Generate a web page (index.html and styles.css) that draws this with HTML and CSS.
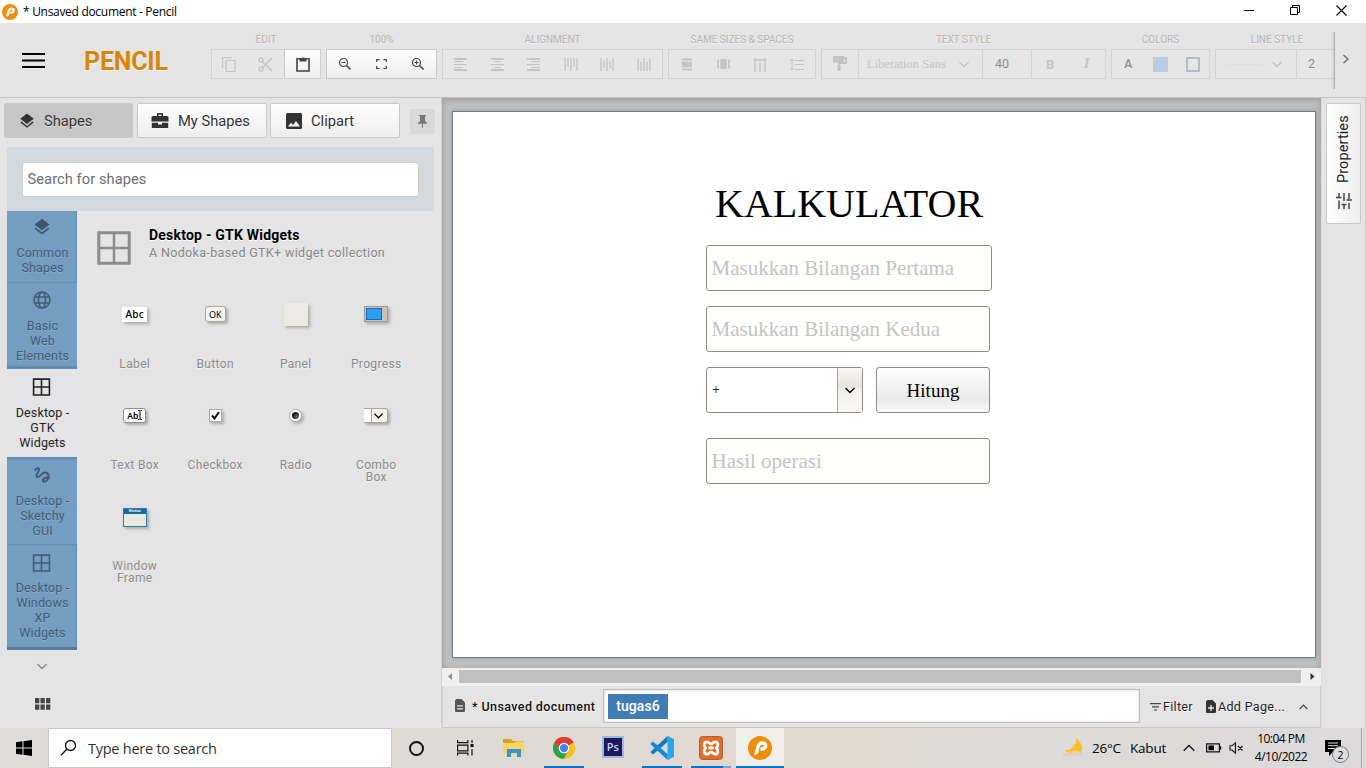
FILE: index.html
```html
<!DOCTYPE html>
<html lang="en">
<head>
<meta charset="utf-8">
<title>* Unsaved document - Pencil</title>
<link rel="stylesheet" href="styles.css">
</head>
<body>
<svg class="sprite" aria-hidden="true">
  <symbol id="layers" viewBox="0 0 24 24"><path d="M12 18.500l-7.400-5.700L3 14l9 7 9-7-1.600-1.200zM12 16l9-7-9-7-9 7z"/></symbol>
  <symbol id="grid4" viewBox="0 0 24 24"><path d="M2 2h20v20H2zM12 2v20M2 12h20" fill="none" stroke="currentColor" stroke-width="2"/></symbol>
  <symbol id="down" viewBox="0 0 12 12"><path d="M1.500 4L6 8.500 10.500 4" fill="none" stroke="currentColor" stroke-width="1.400"/></symbol>
  <symbol id="pencil" viewBox="0 0 24 24"><circle cx="12" cy="12" r="12" fill="#ee8e0b"/><path d="M8.500 17l1-4.500C10.200 8.500 11.500 7 14.300 7c2.500 0 3.700 1.400 3.200 3.200-.5 2.200-2.200 3-5 3" fill="none" stroke="#fff" stroke-width="3.400"/><path d="M6.500 19.500l.300-4 3.700 1.500z" fill="#fff"/></symbol>
  <symbol id="zoomglass" viewBox="0 0 14 14"><g fill="none" stroke="currentColor"><circle cx="5.500" cy="5.500" r="4" stroke-width="1.200"/><path d="M8.500 8.500l4 4" stroke-width="1.600"/><path d="M3.500 5.500h4"/></g></symbol>
</svg>
<div class="window">
  <header class="titlebar">
    <svg class="app-icon"><use href="#pencil"/></svg>
    <span class="title">* Unsaved document - Pencil</span>
    <div class="win-buttons">
      <svg width="11" height="11"><path d="M0 5.500h10" stroke="#000"/></svg>
      <svg width="11" height="11"><path d="M.5 2.500h7v7h-7zM2.500 2V.5h7v7H8" stroke="#000" fill="none"/></svg>
      <svg width="11" height="11"><path d="M.5.5l10 10M10.500.5l-10 10" stroke="#000" stroke-width="1.100"/></svg>
    </div>
  </header>

  <div class="toolbar">
    <svg class="burger" width="24" height="16"><path d="M0 1h23M0 7.500h23M0 14h23" stroke="#000" stroke-width="2"/></svg>
    <div class="brand">PENCIL</div>
    <div class="groups">
      <section class="group g-edit"><h6>EDIT</h6><div class="box">
        <span class="tool w36"><svg width="15" height="15"><path d="M4 3.500h9v11H4zM.6 11V.6H10" fill="none" stroke="currentColor" stroke-width="1.200"/></svg></span>
        <span class="tool w37"><svg width="15" height="15" fill="none" stroke="currentColor" stroke-width="1.500"><circle cx="3" cy="3" r="2"/><circle cx="3" cy="12" r="2"/><path d="M4.500 4.500l9.500 9.500M4.500 10.500L14 1"/></svg></span>
        <span class="tool enabled paste"><svg width="14" height="16"><path d="M1 2.800h12V15H1z" fill="none" stroke="currentColor" stroke-width="1.600"/><path d="M3.500 2.500h2a1.600 1.600 0 0 1 3 0h2v3h-7z" fill="currentColor"/></svg></span>
      </div></section>
      <section class="group g-zoom"><h6>100%</h6><div class="box enabled">
        <span class="tool"><svg width="14" height="14"><use href="#zoomglass"/></svg></span>
        <span class="tool"><svg width="11" height="11"><path d="M.7 3V.7H3.500M7.500.7h2.800V3M10.300 7v2.500H7.500M3.500 9.500H.7V7" fill="none" stroke="currentColor" stroke-width="1.200"/></svg></span>
        <span class="tool"><svg width="14" height="14"><use href="#zoomglass"/><path d="M5.500 3.500v4" stroke="currentColor"/></svg></span>
      </div></section>
      <section class="group g-align"><h6>ALIGNMENT</h6><div class="box">
        <span class="tool"><svg width="14" height="14"><path d="M0 2h13M0 13h13" stroke-width="2"/><path d="M0 4.500h9M0 7.500h13M0 10.500h9"/></svg></span>
        <span class="tool"><svg width="14" height="14"><path d="M0 2h13M0 13h13" stroke-width="2"/><path d="M3 4.500h7M0 7.500h13M3 10.500h7"/></svg></span>
        <span class="tool"><svg width="14" height="14"><path d="M0 2h13M0 13h13" stroke-width="2"/><path d="M4 4.500h9M0 7.500h13M4 10.500h9"/></svg></span>
        <span class="tool"><svg width="14" height="14"><path d="M1 1v13M4 1v9M7 1v13M10 1v9M13 1v13" stroke-width="1.400"/></svg></span>
        <span class="tool"><svg width="14" height="14"><path d="M1 1v13M4 4v7M7 1v13M10 4v7M13 1v13" stroke-width="1.400"/></svg></span>
        <span class="tool"><svg width="14" height="14"><path d="M1 1v13M4 5v9M7 1v13M10 5v9M13 1v13" stroke-width="1.400"/></svg></span>
      </div></section>
      <section class="group g-same"><h6>SAME SIZES &amp; SPACES</h6><div class="box">
        <span class="tool"><svg width="12" height="13"><path d="M1 1.500h10M1 11.500h10" stroke-width="2"/><path d="M1 6.500h10" stroke-width="5.500"/></svg></span>
        <span class="tool"><svg width="13" height="12"><path d="M1 1.500v9M12 1.500v9" stroke-width="2"/><path d="M6.500 1v10" stroke-width="6.500"/></svg></span>
        <span class="tool"><svg width="14" height="15"><path d="M1 3h12M2 5v10M7 5v10M12 5v10M3 1L1 3l2 2M11 1l2 2-2 2" stroke-width="1.300"/></svg></span>
        <span class="tool"><svg width="15" height="13"><path d="M3 1v11M1 3l2-2 2 2M1 10l2 2 2-2M6 2.500h9M6 6.500h9M6 11.500h9"/></svg></span>
      </div></section>
      <section class="group g-text"><h6>TEXT STYLE</h6><div class="box">
        <span class="tool format"><svg width="14" height="16"><path d="M1 .5h9v5H1zM10 2h3v5H6v8" stroke-width="2"/><path d="M1 3h9" stroke-width="4"/><path d="M6 9v6" stroke-width="3"/></svg></span>
        <span class="font-name">Liberation Sans <svg width="12" height="12"><use href="#down"/></svg></span>
        <span class="font-size">40</span>
        <span class="tool bold">B</span><span class="tool italic">I</span>
      </div></section>
      <section class="group g-colors"><h6>COLORS</h6><div class="box">
        <span class="tool letter">A</span><span class="tool"><i class="fill-swatch"></i></span><span class="tool"><i class="stroke-swatch"></i></span>
      </div></section>
      <section class="group g-line"><h6>LINE STYLE</h6><div class="box">
        <span class="line-kind"><i></i><svg width="12" height="12"><use href="#down"/></svg></span><span class="line-width">2</span>
      </div></section>
    </div>
    <div class="more"><svg width="8" height="10"><path d="M1.500 1L6 5 1.500 9" fill="none" stroke="#666" stroke-width="1.300"/></svg></div>
  </div>

  <main class="workspace">
    <aside class="left">
      <nav class="tabs">
        <button class="tab active"><svg width="18" height="18"><use href="#layers"/></svg>Shapes</button>
        <button class="tab mine"><svg width="18" height="16"><path d="M6 3V0h6v3h4a1.500 1.500 0 0 1 1.500 1.500v4H.5v-4A1.500 1.500 0 0 1 2 3zm1.500 0h3V1.500h-3zM.8 9.800H7V11.500h4V9.800h6.200V15H.8z" fill-rule="evenodd"/></svg>My Shapes</button>
        <button class="tab clip"><svg width="16" height="16"><path d="M1.500 0h13A1.500 1.500 0 0 1 16 1.500v13a1.500 1.500 0 0 1-1.500 1.500h-13A1.500 1.500 0 0 1 0 14.500v-13A1.500 1.500 0 0 1 1.500 0zM2 13.500h12L10 8l-3 4-2-2.500z" fill-rule="evenodd"/></svg>Clipart</button>
        <span class="pin"><svg width="9" height="13"><path d="M1 0h7v1H7v5l2 2v.8H5V12.500H4V8.800H0V8l2-2V1H1z"/></svg></span>
      </nav>
      <div class="search"><input type="text" placeholder="Search for shapes"></div>
      <div class="library">
        <div class="cats">
          <div class="cat c1"><svg width="20" height="20"><use href="#layers"/></svg>Common<br>Shapes</div>
          <div class="cat c2"><svg width="20" height="20" viewBox="0 0 20 20" fill="none" stroke="currentColor" stroke-width="1.500"><circle cx="10" cy="10" r="8"/><ellipse cx="10" cy="10" rx="3.500" ry="8"/><path d="M2.500 7h15M2.500 13h15"/></svg>Basic<br>Web<br>Elements</div>
          <div class="cat selected"><svg width="19" height="20"><use href="#grid4"/></svg>Desktop -<br>GTK<br>Widgets</div>
          <div class="cat c4"><svg width="20" height="20" fill="none" stroke="currentColor" stroke-width="2"><path d="M2.500 5.500C4.500 3 7.500 2 7 5c-.3 2-4 5.500-2 7 2.500 1 4.500-4.500 8-4.500 3 0 4 2 3.500 5-.5 3-4.500 5.500-5.500 3.500-.8-2 2.500-4 7-3.700"/></svg>Desktop -<br>Sketchy<br>GUI</div>
          <div class="cat c5"><svg width="19" height="20"><use href="#grid4"/></svg>Desktop -<br>Windows<br>XP<br>Widgets</div>
          <svg class="cat-more" width="12" height="12"><use href="#down"/></svg>
          <svg class="cat-all" width="16" height="12"><path d="M0 0h4.300v5.300H0zM5.500 0h4.300v5.300H5.500zM11 0h4.300v5.300H11zM0 6.500h4.300v5.300H0zM5.500 6.500h4.300v5.300H5.500zM11 6.500h4.300v5.300H11z" fill="#444"/></svg>
        </div>
        <section class="collection">
          <div class="coll-head">
            <svg width="34" height="34"><path d="M1.800 1.800h30.400v30.400H1.800z" fill="none" stroke="#8b8b8b" stroke-width="3"/><path d="M17 2v30M2 17h30" stroke="#8b8b8b" stroke-width="2.500"/></svg>
            <div><h2>Desktop - GTK Widgets</h2><p>A Nodoka-based GTK+ widget collection</p></div>
          </div>
          <div class="shapes">
            <figure><div class="thumb"><span class="s-label">Abc</span></div><figcaption>Label</figcaption></figure>
            <figure><div class="thumb"><span class="s-button">OK</span></div><figcaption>Button</figcaption></figure>
            <figure><div class="thumb"><span class="s-panel"></span></div><figcaption>Panel</figcaption></figure>
            <figure><div class="thumb"><span class="s-progress"><i></i></span></div><figcaption>Progress</figcaption></figure>
            <figure><div class="thumb"><span class="s-text">Ab<svg width="4" height="10"><path d="M0 .5h1.500L2 1v8l.5.5H4M4 .5H2.500M0 9.500h1.500" fill="none" stroke="#000"/></svg></span></div><figcaption>Text Box</figcaption></figure>
            <figure><div class="thumb"><span class="s-check"><svg width="9" height="9"><path d="M1 4.500l2.500 3L8 1" fill="none" stroke="#111" stroke-width="2"/></svg></span></div><figcaption>Checkbox</figcaption></figure>
            <figure><div class="thumb"><span class="s-radio"><i></i></span></div><figcaption>Radio</figcaption></figure>
            <figure><div class="thumb"><span class="s-combo"><i></i><svg width="11" height="11" viewBox="0 0 12 12"><use href="#down"/></svg></span></div><figcaption>Combo<br>Box</figcaption></figure>
            <figure><div class="thumb"><span class="s-window"><b>Window</b></span></div><figcaption>Window<br>Frame</figcaption></figure>
          </div>
        </section>
      </div>
    </aside>

    <section class="center">
      <div class="canvas"><div class="page">
        <h1>KALKULATOR</h1>
        <div class="field first">Masukkan Bilangan Pertama</div>
        <div class="field">Masukkan Bilangan Kedua</div>
        <div class="row">
          <div class="combo"><span>+</span><b><svg width="12" height="12"><use href="#down"/></svg></b></div>
          <div class="calc">Hitung</div>
        </div>
        <div class="field result">Hasil operasi</div>
      </div></div>
      <div class="scrollbar">
        <svg width="17" height="18"><path d="M10 5v7L6 8.500z" fill="#8f8f8f"/></svg>
        <i></i>
        <svg width="20" height="18"><path d="M9.500 5v7l4-3.500z" fill="#333"/></svg>
      </div>
      <div class="pagebar">
        <svg class="doc" width="10" height="13"><path d="M1.500 0H6.500L10 3.500V12a1 1 0 0 1-1 1H1a1 1 0 0 1-1-1V1.200zM2 6.300v1.200h6V6.300zm0 3v1.200h6V9.300z" fill="#555" fill-rule="evenodd"/></svg>
        <strong>* Unsaved document</strong>
        <div class="pages"><span>tugas6</span></div>
        <svg class="filter-icon" width="12" height="8"><path d="M0 .6h11M2 3.800h7M4 7h3" stroke="#444" stroke-width="1.200"/></svg>
        <span class="filter">Filter</span>
        <svg class="add-icon" width="10" height="13"><path d="M1.500 0H6.500L10 3.500V12a1 1 0 0 1-1 1H1a1 1 0 0 1-1-1V1.200zM4.300 5v2.300H2v1.400h2.300V11h1.400V8.700H8V7.300H5.700V5z" fill="#333" fill-rule="evenodd"/></svg>
        <span class="add">Add Page...</span>
        <svg class="up" width="9" height="6"><path d="M.7 5l3.800-3.800L8.300 5" fill="none" stroke="#444" stroke-width="1.200"/></svg>
      </div>
    </section>

    <aside class="right"><div class="props">
      <span>Properties</span>
      <svg width="16" height="16" fill="none" stroke="#444" stroke-width="1.500"><path d="M3 0v4M0 4.500h5.500M3 7.500V16M8 0v8M8 12v4M5.500 11.500h5M13 0v6M10.500 7h5.500M13 10v6"/></svg>
    </div></aside>
  </main>

  <footer class="taskbar">
    <div class="start"><svg width="16" height="16"><path d="M0 2.200l6.500-.9v6.200H0zM7.500 1.200L16 0v7.500H7.500zM0 8.500h6.500v6.200L0 13.800zM7.500 8.500H16V16l-8.500-1.200z"/></svg></div>
    <div class="tb-search"><svg width="18" height="18" fill="none" stroke="#111" stroke-width="1.300"><circle cx="10.500" cy="6.500" r="5"/><path d="M7 10L1 16.300"/></svg><span>Type here to search</span></div>
    <div class="apps">
      <div class="app"><svg width="17" height="17"><circle cx="8.500" cy="8.500" r="6.500" fill="none" stroke="#111" stroke-width="2"/></svg></div>
      <div class="app"><svg width="17" height="16" fill="none" stroke="#111" stroke-width="1.200"><path d="M.6 0v2.600h10.300V0M.6 5.200h10.300v5.600H.6zM.6 15.500v-2.400h10.300v2.400M15 0v3M15 9v6.500"/><path d="M13.500 5.500h3" stroke-width="3"/></svg></div>
      <div class="app"><svg width="22" height="20"><path d="M0 1h8l2 2h11v5H0z" fill="#d9a520"/><path d="M0 5h12l1-1.500h8V16H0z" fill="#fcd565"/><path d="M4 19v-8h14v8h-4v-4H8v4z" fill="#3b93cf"/></svg></div>
      <div class="app running"><svg width="22" height="22" viewBox="0 0 24 24"><circle cx="12" cy="12" r="12" fill="#fbc116"/><path d="M12 12L1.600 6A12 12 0 0 1 22.400 6z" fill="#df3c2e"/><path d="M12 6.500h10.700A12 12 0 0 0 1.600 6l5.500 8.500z" fill="#df3c2e"/><path d="M1.600 6A12 12 0 0 0 11.500 24l5.500-9.500-9.800.3z" fill="#2ba24c"/><circle cx="12" cy="12" r="5.800" fill="#fff"/><circle cx="12" cy="12" r="4.500" fill="#4284ee"/></svg></div>
      <div class="app"><span class="ps">Ps</span></div>
      <div class="app running"><svg width="24" height="24" viewBox="0 0 24 24"><path d="M17.500 0L24 3v18l-6.500 3z" fill="#2aa5ee"/><path d="M17.500 0v6L3 18.500.3 16z" fill="#1479bf"/><path d="M.3 8L3 5.500 17.500 18v6z" fill="#1689d3"/></svg></div>
      <div class="app running split"><svg width="24" height="24"><rect x=".5" y=".5" width="23" height="23" rx="3" fill="#e66b24" stroke="#a9613a"/><path d="M8 5.800c2 0 2 2.200 4 2.200s2-2.200 4-2.200c3.500 0 3.500 4 1.500 6.200 2 2.200 2 6.200-1.500 6.200-2 0-2-2.200-4-2.200s-2 2.200-4 2.200c-3.500 0-3.500-4-1.500-6.200-2-2.200-2-6.200 1.500-6.200z" fill="none" stroke="#fff" stroke-width="2.800"/><path d="M9.500 11.900h5" stroke="#fff" stroke-width="3"/></svg></div>
      <div class="app current"><svg width="24" height="24"><use href="#pencil"/></svg></div>
    </div>
    <div class="tray">
      <svg class="weather" width="24" height="20"><path d="M15 0a10 10 0 0 1-11 12c2 6 16 7 17 0 .5-5-2-9-6-12z" fill="#fac21c"/><path d="M1 18q-1-3 3-3 3-2 6 0 3-4 7-2 5 1 4 3 2 2-3 2z" fill="#ddd1c0"/></svg>
      <span class="temp">26°C</span><span class="cond">Kabut</span>
      <svg class="chev" width="12" height="8"><path d="M.7 6.800L6 1.500l5.300 5.300" fill="none" stroke="#111" stroke-width="1.300"/></svg>
      <svg class="battery" width="16" height="10"><path d="M.6.8h12.800v8H.6z" fill="none" stroke="#111" stroke-width="1.200"/><path d="M2.500 2.500H8v4.700H2.500zM14 3.200h1.200v3.300H14z"/></svg>
      <svg class="mute" width="15" height="12"><path d="M1 3.800h2L6.500.8v10.400L3 8H1zM9 4l4.500 4.500M13.500 4L9 8.500" fill="none" stroke="#111" stroke-width="1.100"/></svg>
      <div class="clock"><span>10:04 PM</span><span>4/10/2022</span></div>
      <div class="notice"><svg width="17" height="16"><path d="M0 0h16v12H8l-4 4v-4H0z"/><path d="M3 3h10M3 5.700h10M3 8.500h7" stroke="#ddd" stroke-width="1"/></svg><b>2</b></div>
      <i class="peek"></i>
    </div>
  </footer>
</div>
</body>
</html>
```
FILE: styles.css
```css
* { box-sizing: border-box; }
body { margin: 0; font-family: Roboto, sans-serif; color: #222; overflow: hidden; }
svg { display: block; flex: none; }
.sprite { width: 0; height: 0; position: absolute; }
h1, h2, h6, p, figure { margin: 0; }
.window { width: 1366px; height: 768px; display: flex; flex-direction: column; background: #e4e4e4; }

.titlebar { height: 23px; background: #fff; display: flex; align-items: center; padding-left: 2px; flex: none; }
.app-icon { width: 16px; height: 16px; }
.title { font: 12px "Open Sans", sans-serif; color: #000; margin-left: 5px; letter-spacing: -.3px; white-space: nowrap; }
.win-buttons { margin-left: auto; display: flex; gap: 35px; padding: 0 19px 3px 0; }

.toolbar { height: 75px; flex: none; display: flex; border-bottom: 1px solid #c4c4c4; }
.burger { margin: 30px 0 0 22px; }
.brand { width: 127px; margin: 24px 0 0 38px; font-size: 25px; line-height: 30px; font-weight: 700; letter-spacing: -.2px; color: #d5860d; text-shadow: 0 1px #f4f4f4; }
.groups { width: 1123px; display: flex; gap: 5px; padding-top: 11px; overflow: hidden; flex: none; color: #c4c4c4; }
.group { flex: none; }
.group h6 { font-size: 10px; line-height: 12px; height: 15px; font-weight: 400; color: #b5b5b5; text-align: center; text-shadow: 0 1px #f1f1f1; }
.box { height: 30px; border: 1px solid #d1d1d1; display: flex; background: #e6e6e6; }
.box.enabled, .tool.enabled { background: linear-gradient(#fff, #ededed); border-color: #c8c8c8; color: #444; }
.g-edit { width: 110px; }
.g-zoom { width: 111px; }
.g-align { width: 221px; }
.g-same { width: 148px; }
.g-text { width: 285px; }
.g-colors { width: 99px; }
.g-line { width: 124px; }
.tool { flex: 1; display: flex; align-items: center; justify-content: center; }
.g-align svg, .g-same svg, .g-text .format svg { fill: none; stroke: currentColor; }
.w36 { flex: 0 0 34px; }
.w37 { flex: 0 0 38px; }
.paste { border-left: 1px solid #c8c8c8; }
.format { flex: 0 0 37px; border-right: 1px solid #d1d1d1; }
.font-name { width: 124px; display: flex; align-items: center; justify-content: space-between; padding: 0 12px 0 8px; font: 12.500px "Liberation Serif", serif; border-right: 1px solid #d1d1d1; }
.font-size { width: 49px; padding-left: 12px; font-size: 12.500px; line-height: 28px; color: #8e8e8e; border-right: 1px solid #d1d1d1; }
.bold { font: bold 13px Roboto, sans-serif; }
.italic { font: italic bold 12px "DejaVu Serif", serif; }
.letter { font-weight: 500; font-size: 12px; color: #8c8c8c; }
.fill-swatch { width: 15px; height: 15px; background: #bccbe0; }
.stroke-swatch { width: 14px; height: 15px; border: 2px solid #b7bacb; }
.line-kind { width: 81px; display: flex; align-items: center; justify-content: space-between; padding: 0 13px 0 11px; border-right: 1px solid #d1d1d1; }
.line-kind i { width: 35px; height: 1px; background: #e0e0e0; }
.line-width { padding-left: 11px; font-size: 12.500px; line-height: 28px; color: #8e8e8e; }
.more { flex: 1; margin: 9px 0 8px; padding: 22px 0 0 7px; border-left: 1px solid #b0b0b0; position: relative; background: #e4e4e4; }
.more::before { content: ""; position: absolute; left: -3px; top: 0; width: 3px; height: 57px; background: linear-gradient(90deg, transparent, #b4b4b4); }

.workspace { flex: 1; min-height: 0; display: flex; }
.left { width: 442px; border-right: 1px solid #d2d2d2; padding: 5px 0 0 4px; }
.tabs { display: flex; gap: 3px; }
.tab { width: 130px; height: 35px; display: flex; align-items: center; gap: 9px; padding: 0 0 0 13px; border: 1px solid #c8c8c8; border-radius: 2px; background: linear-gradient(#fff, #eee); font: 14.700px Roboto, sans-serif; color: #333; fill: #333; text-shadow: 0 1px #fff; }
.tab.active { background: #c6c6c6; width: 129px; text-shadow: 0 1px #e1e1e1; margin-right: 1px; gap: 8px; }
.tab.clip { padding-left: 15px; }
.pin { width: 25px; height: 25px; margin: 6px 0 0 7px; background: #d8d8d8; fill: #777; display: flex; align-items: center; justify-content: center; border-radius: 2px; }
.search { margin: 9px 0 0 3px; width: 427px; height: 64px; padding: 15px; background: #d2d8dc; }
.search input { display: block; width: 397px; height: 35px; border: 1px solid #ccc; border-radius: 3px; padding: 0 5px 2px 4.500px; font: 14.700px Roboto, sans-serif; letter-spacing: .05px; }
.search input::placeholder { color: #6f6f6f; }
.library { display: flex; padding-left: 3px; }
.cats { width: 70px; flex: none; display: flex; flex-direction: column; }
.cat { height: 88px; display: flex; flex-direction: column; padding-top: 8px; padding-left: 1px; background: #749dc1; border-bottom: 1px solid #6790b4; box-shadow: inset -1px 0 1px #658db0; font-size: 12.500px; line-height: 15px; letter-spacing: .15px; text-align: center; color: #405c76; fill: #3d556b; text-shadow: 0 1px #89abca; }
.cat svg { margin: -1px 0 6px 24px; }
.c1 { height: 72px; padding-top: 7px; }
.c1 svg { margin-bottom: 8px; }
.c2 { height: 86px; padding-top: 8px; box-shadow: inset 0 -3px 3px -2px #527ba0; }
.c2 svg { margin-bottom: 8px; }
.cat.selected { height: 88px; padding-top: 9px; color: #222; background: #e4e4e7; border-color: #e4e4e7; text-shadow: none; box-shadow: none; }
.cat.selected svg { margin-bottom: 8px; }
.c4 { padding-top: 9px; box-shadow: inset 0 3px 3px -2px #527ba0; }
.c4 svg { margin-bottom: 8px; }
.c5 { height: 105px; border-bottom: 3px solid #587c9e; }
.c5 svg { margin-top: 0; margin-bottom: 7px; }
.cat-more { color: #888; margin: 10px 0 0 29px; }
.cat-all { margin: 26px 0 0 28px; }
.collection { flex: 1; }
.coll-head { display: flex; gap: 18px; padding: 15px 0 0 20px; height: 65px; }
.coll-head svg { margin-top: 5px; }
.coll-head h2 { font-size: 14px; line-height: 18px; font-weight: 700; color: #000; letter-spacing: .22px; text-shadow: 0 1px #fff; }
.coll-head p { font-size: 12.500px; line-height: 17px; color: #858585; letter-spacing: .34px; text-shadow: 0 1px #f4f4f4; }
.shapes { display: grid; grid-template-columns: repeat(4, 80.500px); grid-auto-rows: 101px; padding-left: 17.500px; }
.thumb { height: 78px; padding: 0 0 2px; display: flex; align-items: center; justify-content: center; }
figcaption { height: 23px; font-size: 12px; line-height: 12px; text-align: center; color: #8a8a8a; letter-spacing: .35px; padding-top: 4px; text-shadow: 0 1px #f3f3f3; }
.thumb > span { display: flex; align-items: center; justify-content: center; box-shadow: 2px 2px 3px #aaa; font-family: "Noto Sans", sans-serif; font-size: 10px; color: #000; flex: none; }
.thumb .s-label { width: 25px; height: 15px; background: #fff; font-weight: 500; letter-spacing: .3px; }
.thumb .s-button { width: 21px; height: 16px; border: 1px solid #aaa596; border-radius: 3px; background: #f5f4f1; font-size: 9px; }
.s-panel { width: 24px; height: 23px; background: #edeae4; }
.thumb .s-progress { width: 24px; height: 16px; border: 1px solid #9d988b; background: #c9c3b6; justify-content: flex-start; }
.s-progress i { width: 16px; height: 12px; border: 1px solid #1368cb; background: #2d9eef; margin-left: 1px; }
.thumb .s-text { width: 23px; height: 15px; border: 1px solid #958f82; border-radius: 3px; background: #fff; font-size: 8.500px; font-weight: 600; }
.s-check { width: 13px; height: 13px; border: 1px solid #aaa; background: #fff; }
.s-radio { width: 13px; height: 13px; border: 1px solid #aaa; border-radius: 50%; background: #fff; }
.s-radio i { width: 7px; height: 7px; border-radius: 50%; background: radial-gradient(circle at 65% 65%, #777, #111 55%); }
.thumb .s-combo { width: 24px; height: 15px; border: 1px solid #aca697; border-left: 0; border-radius: 0 3px 3px 0; background: #f4f3ee; justify-content: flex-start; gap: 1px; }
.s-combo i { width: 8px; height: 13px; background: #fff; border-right: 1px solid #aca697; }
.thumb .s-window { width: 24px; height: 19px; border: 1px solid #287fa7; background: #ece9e3; align-items: flex-start; margin-top: 3px; }
.s-window b { width: 100%; height: 5px; background: #176995; color: #fff; font-size: 3px; line-height: 4px; text-align: center; }

.center { width: 879px; flex: none; display: flex; flex-direction: column; }
.canvas { height: 570px; flex: none; background: #c1c1c1; padding: 13px 5px 0 10px; box-shadow: inset 2px 3px 5px #a5a5a5, inset -2px 0 5px #aaa; }
.page { width: 864px; height: 547px; border: 1px solid #608199; background: #fff; box-shadow: 0 0 4px #8b9298; padding: 65px 0 0 253px; font-family: "Liberation Serif", serif; color: #000; }
.page h1 { font-weight: 400; font-size: 40px; line-height: 54px; height: 68px; padding-left: 9px; }
.field { width: 284px; height: 46px; border: 1px solid #908d82; border-radius: 3px; background: #fffffd; margin-bottom: 15px; padding-left: 4.500px; line-height: 44px; font-size: 21px; color: #c4c4c4; white-space: nowrap; }
.field.first { width: 286px; }
.row { display: flex; gap: 13px; margin-bottom: 25px; }
.combo { width: 157px; height: 46px; border: 1px solid #908d82; border-radius: 3px; display: flex; justify-content: space-between; background: #fff; }
.combo span { padding: 14px 0 0 5px; font-size: 14px; line-height: 16px; }
.combo b { width: 25px; border-left: 1px solid #aaa696; background: linear-gradient(#f8f7f4, #e6e3dc 43%, #f2f0ec 46%, #f8f7f4); display: flex; align-items: center; justify-content: center; }
.calc { width: 114px; height: 46px; border: 1px solid #908d82; border-radius: 3px; background: linear-gradient(#fff, #eaeaea 72%, #fafafa); text-align: center; font-size: 19px; line-height: 46px; }
.scrollbar { height: 18px; display: flex; background: #f0f0f0; }
.scrollbar i { flex: 1; height: 13px; margin-top: 2px; background: #c1c1c1; }
.pagebar { flex: 1; display: flex; align-items: center; padding-left: 13px; border-left: 1px solid #ccc; border-right: 1px solid #ccc; border-bottom: 1px solid #c8c8c8; font-size: 13px; color: #222; text-shadow: 0 1px #fff; white-space: nowrap; }
.doc { margin: -2px 7px 0 -1px; }
.pagebar strong { width: 131px; font-weight: 500; font-size: 12.500px; letter-spacing: .4px; color: #111; }
.pages { width: 537px; height: 34px; margin: -1px 0 0 0; background: #fff; border: 1px solid #bdbdbd; padding: 4px; box-shadow: inset 0 0 3px #ccc; }
.pages span { display: inline-block; height: 25px; width: 60px; text-align: center; line-height: 25px; background: #417cb5; color: #fff; font-size: 14px; font-weight: 500; letter-spacing: .1px; text-shadow: none; }
.filter-icon { margin-left: 10px; }
.filter { width: 43px; margin-left: 1px; font-size: 12.500px; letter-spacing: .3px; }
.add { width: 81px; margin-left: 2px; font-size: 12.500px; letter-spacing: .33px; }
.right { flex: 1; border-left: 1px solid #ddd; border-right: 1px solid #ccc; padding: 5px 0 0 4px; }
.props { width: 35px; height: 121px; border: 1px solid #c9c9c9; border-radius: 2px; background: linear-gradient(90deg, #fff, #eee); display: flex; flex-direction: column; align-items: center; padding-top: 11px; gap: 10px; }
.props span { writing-mode: vertical-rl; transform: rotate(180deg); font-size: 14.500px; line-height: 16px; color: #222; height: 68px; letter-spacing: .1px; }

.taskbar { height: 40px; flex: none; display: flex; background: linear-gradient(90deg, #dddcda, #dedad5 35%, #e3d9ce 62%, #dedada 75%, #dcdada); font-family: "Open Sans", sans-serif; color: #000; }
.start { width: 48px; display: flex; align-items: center; justify-content: center; }
.tb-search { width: 344px; height: 40px; border: 1px solid #c9c9c9; background: #fff; display: flex; align-items: center; gap: 10px; padding-left: 11px; font-size: 14.500px; color: #333; letter-spacing: -.25px; }
.apps { display: flex; gap: 1.200px; }
.app { width: 48px; height: 40px; display: flex; align-items: center; justify-content: center; background: linear-gradient(#0874ce, #0874ce) no-repeat center bottom / 0 2px; }
.app.running { background-size: 40px 2px; }
.app.split { background: linear-gradient(90deg, #0874ce 80%, #69a9df 80%) no-repeat center bottom / 40px 2px; }
.app.current { background: linear-gradient(#f1efec, #f1efec 38px, #0874ce 38px); }
.ps { width: 22px; height: 22px; margin-bottom: 2px; border: 2px solid #98bae7; background: #20175b; color: #b8d9ff; font-size: 11px; line-height: 17px; font-weight: 600; text-align: center; }
.tray { margin-left: auto; display: flex; align-items: center; white-space: nowrap; }
.weather { margin-right: 7px; }
.temp { width: 38px; font-size: 13.500px; letter-spacing: -.25px; }
.cond { width: 53px; font-size: 13.500px; letter-spacing: -.2px; }
.chev { margin-right: 11px; }
.battery { margin-right: 7px; }
.mute { margin-right: 6px; }
.clock { width: 62px; display: flex; flex-direction: column; align-items: center; font-size: 12px; line-height: 18px; letter-spacing: -.5px; margin: 0 0 1px; }
.notice { width: 49px; height: 40px; padding: 12px 0 0 13px; position: relative; }
.notice b { position: absolute; left: 20px; top: 18px; width: 17px; height: 17px; border: 1px solid #777; border-radius: 50%; background: #ddd; font-size: 11px; line-height: 15px; font-weight: 400; text-align: center; }
.peek { width: 5px; height: 40px; border-left: 1px solid #aaa; }
```
